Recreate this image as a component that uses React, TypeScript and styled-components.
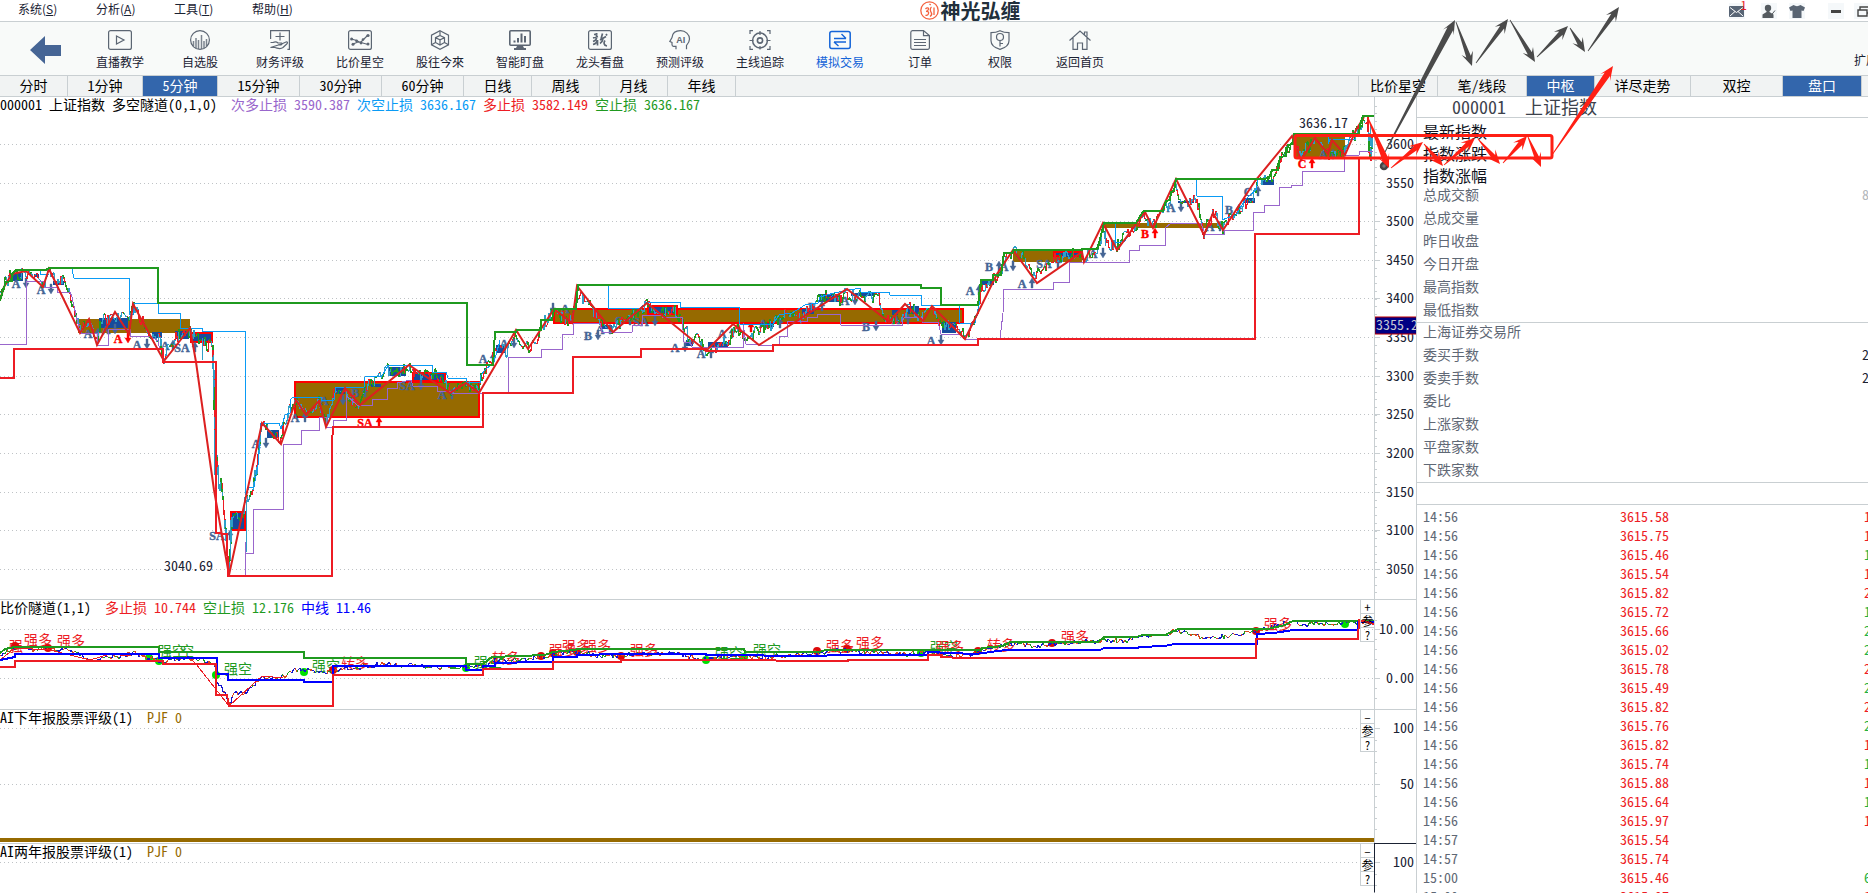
import React from "react";
import styled, { createGlobalStyle, css } from "styled-components";

const MONO = `"Noto Sans Mono CJK SC", "Noto Sans CJK SC", "Liberation Mono", monospace`;
const SANS = `"Noto Sans CJK SC", "Liberation Sans", sans-serif`;
const LINE = "#c9cfd2";
const BLUE = "#3366ac";
const RED = "#ed1c24";
const GREEN = "#1f9a1f";
const OLIVE = "#966a00";
const STEEL = "#466595";
const INK = "#1a2233";
const GREY = "#5f6875";

const GlobalStyle = createGlobalStyle`
  * { box-sizing: border-box; }
  body { margin: 0; background: #fff; overflow: hidden; }
  button { font: inherit; color: inherit; border: 0; padding: 0; margin: 0; background: none; cursor: pointer; }
`;

const Shell = styled.div`
  position: relative;
  display: flex;
  flex-direction: column;
  height: 100vh;
  overflow: hidden;
  font-family: ${SANS};
  font-size: 12px;
  color: ${INK};
`;

const MenuBar = styled.header`
  display: grid;
  grid-template-columns: 1fr auto 1fr;
  align-items: center;
  height: 22px;
  flex: none;
  border-bottom: 1px solid ${LINE};
`;

const Menus = styled.nav`
  display: flex;
  padding-left: 18px;
`;

const MenuButton = styled.button`
  width: 78px;
  padding-bottom: 3px;
  text-align: left;
  line-height: 18px;
`;

const Brand = styled.div`
  display: flex;
  align-items: center;
  gap: 2px;
  padding-left: 72px;
  font-size: 20px;
  line-height: 18px;
  font-weight: 700;
  color: #22303c;
`;

const WindowTools = styled.div`
  display: flex;
  justify-content: flex-end;
  align-items: center;
  margin-right: -2px;
`;

const WindowButton = styled.button<{ $space?: number }>`
  position: relative;
  flex: none;
  width: 16px;
  height: 16px;
  margin-left: ${(p) => p.$space ?? 12}px;
  background: #f5f8fa;
  svg { display: block; }
`;

const Badge = styled.span`
  position: absolute;
  top: -4px;
  right: -2px;
  color: ${RED};
  font-size: 12px;
  line-height: 12px;
`;

const ToolBar = styled.div`
  display: flex;
  height: 54px;
  flex: none;
  background: #f8faf9;
  border-bottom: 1px solid ${LINE};
`;

const BackButton = styled.button`
  display: flex;
  align-items: flex-start;
  width: 62px;
  margin-right: 18px;
  padding: 14px 0 0 30px;
`;

const ToolButton = styled.button<{ $active?: boolean }>`
  display: flex;
  flex-direction: column;
  align-items: center;
  gap: 3px;
  width: 80px;
  padding-top: 8px;
  line-height: 18px;
  color: ${(p) => (p.$active ? "#1464d8" : INK)};
  svg { display: block; color: ${(p) => (p.$active ? "#1464d8" : "#5c6673")}; }
`;

const ExtendButton = styled.button`
  width: 14px;
  margin-left: auto;
  padding-top: 21px;
  white-space: nowrap;
  overflow: hidden;
`;

const TabBar = styled.div`
  display: flex;
  height: 21px;
  flex: none;
  background: #f1f3f3;
  border-bottom: 1px solid ${LINE};
  font-family: ${MONO};
  font-size: 14px;
`;

const TabGroup = styled.div<{ $end?: boolean }>`
  display: flex;
  ${(p) => p.$end && css`margin-left: auto; border-left: 1px solid ${LINE}; padding-right: 6px;`}
`;

const Tab = styled.button<{ $width: number; $active?: boolean }>`
  width: ${(p) => p.$width}px;
  border-right: 1px solid ${LINE};
  padding-bottom: 2px;
  line-height: 18px;
  background: ${(p) => (p.$active ? BLUE : "transparent")};
  color: ${(p) => (p.$active ? "#fff" : "#000")};
`;

const Body = styled.main`
  display: flex;
  flex: 1;
  min-height: 0;
`;

const Charts = styled.section`
  display: grid;
  grid-template-rows: minmax(0, 503fr) minmax(0, 110fr) minmax(0, 134fr) minmax(0, 49fr);
  flex: 1;
  min-width: 0;
  border-right: 1px solid ${LINE};
`;

const Pane = styled.div`
  display: grid;
  grid-template-columns: 1fr 42px;
  min-height: 0;
`;

const Plot = styled.div<{ $last?: boolean }>`
  position: relative;
  display: flex;
  flex-direction: column;
  min-width: 0;
  min-height: 0;
  border-bottom: ${(p) => (p.$last ? 0 : 1)}px solid ${LINE};
`;

const PlotTitle = styled.div`
  display: flex;
  gap: 7px;
  height: 16px;
  flex: none;
  font-family: ${MONO};
  font-size: 14px;
  line-height: 14px;
  white-space: pre;
  color: #000;
`;

const Reading = styled.span<{ $color: string }>`
  color: ${(p) => p.$color};
`;

const PlotSvg = styled.svg`
  display: block;
  width: 100%;
  flex: 1;
  min-height: 0;
`;

const AxisBox = styled.div<{ $focus?: boolean }>`
  min-height: 0;
  overflow: hidden;
  border-left: 1px solid ${(p) => (p.$focus ? INK : LINE)};
  border-bottom: 1px solid ${LINE};
  ${(p) => p.$focus && css`border-bottom-color: transparent; margin-top: -1px; border-top: 1px solid ${INK};`}
  svg { display: block; }
`;

const PaneButtons = styled.div`
  position: absolute;
  top: 0;
  right: 0;
  display: flex;
  flex-direction: column;
  width: 14px;
  border-left: 1px solid ${LINE};
`;

const PaneButton = styled.button`
  height: 14px;
  border-bottom: 1px solid ${LINE};
  font-family: ${MONO};
  font-size: 12px;
  line-height: 13px;
  color: #000;
`;

const Side = styled.aside`
  width: 451px;
  flex: none;
  overflow: hidden;
`;

const SideTitle = styled.h1`
  display: flex;
  gap: 19px;
  height: 21px;
  margin: 0;
  padding-left: 35px;
  border-bottom: 1px solid ${LINE};
  font-family: ${MONO};
  font-size: 18px;
  font-weight: 400;
  line-height: 18px;
  color: #3c424c;
`;

const Facts = styled.dl<{ $row: number; $size: number; $color: string; $pull?: number; $line?: boolean }>`
  margin: ${(p) => p.$pull ?? 0}px 0 0;
  padding: 0 0 0 6px;
  font-family: ${MONO};
  font-size: ${(p) => p.$size}px;
  line-height: ${(p) => p.$row - 2}px;
  color: ${(p) => p.$color};
  border-bottom: ${(p) => (p.$line ? 1 : 0)}px solid ${LINE};
`;

const Fact = styled.div`
  display: flex;
  justify-content: space-between;
  padding-bottom: 2px;
  dt, dd { margin: 0; }
`;

const Cut = styled.dd<{ $color: string }>`
  width: 6px;
  overflow: hidden;
  color: ${(p) => p.$color};
`;

const Spacer = styled.div`
  height: 22px;
  border-bottom: 1px solid ${LINE};
`;

const Ticks = styled.table`
  width: 100%;
  margin-top: 3px;
  table-layout: fixed;
  border-collapse: collapse;
  font-family: ${MONO};
  font-size: 14px;
  line-height: 17px;
  td { padding: 0 0 2px; height: 19px; overflow: hidden; white-space: nowrap; }
`;

const TimeCell = styled.td`
  width: 203px;
  color: ${GREY};
  text-indent: 6px;
`;

const PriceCell = styled.td`
  color: ${RED};
`;

const VolumeCell = styled.td<{ $up?: boolean }>`
  width: 4px;
  color: ${(p) => (p.$up ? RED : "#1fb141")};
`;

const Annotation = styled.svg`
  position: absolute;
  top: 0;
  right: 0;
  width: 578px;
  height: 180px;
  pointer-events: none;
`;

/* ---------- drawing helpers ---------- */

type Pt = [number, number];
const toPts = (s: string): Pt[] => s.trim().split(/\s+/).map((p) => p.split(",").map(Number) as Pt);

/* Splits a jittered walk along a centre line into one path per colour. */
function walk(centre: string, amp: number, step: number, weights: number[], seedStart: number): string[] {
  let seed = seedStart;
  const rnd = () => ((seed = (seed * 1103515245 + 12345) % 2147483648) / 2147483648);
  const pts = toPts(centre);
  const out = weights.map(() => "");
  let prev: Pt = pts[0];
  for (let i = 1; i < pts.length; i++) {
    const [x0, y0] = pts[i - 1];
    const [x1, y1] = pts[i];
    const n = Math.max(1, Math.round(Math.hypot(x1 - x0, (y1 - y0) / 4) / step));
    for (let k = 1; k <= n; k++) {
      const t = k / n;
      const next: Pt = [Math.round(x0 + (x1 - x0) * t), Math.round(y0 + (y1 - y0) * t + (rnd() - 0.5) * 2 * amp)];
      let r = rnd();
      let c = 0;
      while (c < weights.length - 1 && r > weights[c]) r -= weights[c++];
      out[c] += `M${prev[0]},${prev[1]}L${next[0]},${next[1]}`;
      prev = next;
    }
  }
  return out;
}

const PRICE = `0,292 3,287 12,272 14,277 26,273 38,277 43,286 49,270 56,280 62,280 70,293 80,330 88,320 97,343 101,318 108,322 115,315 127,320 133,306 140,318 150,332 158,336 164,360 175,337 185,333 190,332 200,338 208,345 213,344 215,430 219,490 221,480 225,520 229,570 232,520 243,515 246,500 252,492 258,460 262,425 268,432 276,436 281,442 285,420 295,402 306,415 319,402 326,425 335,392 345,390 352,400 358,403 366,385 375,382 388,370 400,372 409,368 420,377 436,375 450,390 466,384 479,391 481,380 487,368 492,361 496,348 507,352 514,334 528,348 538,338 545,322 554,311 562,318 572,321 577,290 583,300 595,312 602,325 613,331 625,320 640,312 648,304 660,311 675,312 682,320 690,342 700,340 706,350 720,345 730,342 734,328 742,330 748,340 755,332 765,328 775,322 785,316 800,318 812,308 818,300 830,295 840,300 846,292 852,298 860,293 870,298 878,293 884,315 890,322 900,318 910,308 923,318 932,307 940,325 950,325 960,325 965,337 975,320 980,300 982,285 990,282 1000,275 1006,258 1013,252 1024,256 1033,275 1041,268 1052,260 1065,256 1078,253 1084,258 1098,250 1103,226 1108,245 1117,246 1128,235 1140,222 1145,214 1153,226 1163,213 1172,195 1176,182 1182,205 1192,201 1198,203 1204,232 1213,215 1223,228 1232,216 1245,203 1252,198 1258,182 1270,180 1280,160 1287,152 1293,140 1300,155 1315,142 1330,155 1345,150 1357,132 1364,120 1368,122 1370,160 1373,135`;

const ZIGZAG = `0,300 4,287 12,274 26,271 43,287 49,269 80,333 89,319 97,345 115,312 129,334 133,304 164,361 190,328 196,362 214,490 229,575 262,423 281,444 296,400 306,415 319,401 326,427 345,388 360,405 409,365 450,393 466,383 479,393 516,330 528,349 554,309 572,323 577,286 613,332 647,303 706,351 733,324 759,345 847,289 889,322 905,304 923,321 932,306 965,339 997,274 1013,250 1037,283 1082,252 1084,262 1103,223 1117,250 1145,212 1153,228 1176,179 1204,235 1213,213 1223,230 1255,181 1292,136 1301,160 1315,138 1328,154 1332,140 1345,155 1356,130 1364,117`;

const UPPER = `0,301 3,290 6,282 12,281 12,274 16,270 46,270 49,268 158,268 158,303 467,303 467,365 493,365 495,332 516,332 517,330 541,330 541,320 552,320 554,309 576,309 578,285 921,285 921,288 941,288 941,305 978,305 981,280 993,280 993,275 1001,275 1004,253 1012,253 1014,250 1082,250 1082,249 1097,249 1099,243 1104,223 1136,223 1142,213 1144,211 1163,211 1166,201 1170,200 1171,192 1174,191 1176,179 1265,179 1270,176 1272,170 1278,170 1280,157 1286,156 1288,145 1293,144 1294,134 1359,134 1360,125 1363,116 1374,116`;
const LOWER = `0,378 14,378 14,349 163,349 163,362 216,362 216,533 227,534 228,576 332,576 332,444 333,427 483,427 483,393 573,393 573,357 641,357 641,349 706,349 706,351 773,351 773,345 978,345 978,339 1255,339 1255,234 1359,234 1359,158`;
const VIOLET = `0,344 26,344 26,281 43,281 43,287 57,287 57,292 70,292 72,297 80,333 97,333 97,345 108,345 108,329 130,329 130,336 150,336 158,341 160,350`;
const VIOLET2 = `245,575 245,542 246,553 253,553 253,509 283,509 283,444 301,444 301,430 319,430 319,417 326,417 326,427 333,427 333,420 346,420 346,395 357,405 372,405 372,399 387,399 387,388 397,388 397,383 411,380 413,386 437,386 437,391 450,391 453,393 508,393 508,357 541,357 541,349 562,349 562,334 573,334 573,323 600,323 602,332 632,332 633,325 642,325 642,315 662,315 662,317 682,317 683,330 684,342 690,342 692,347 743,347 743,323 746,344 759,345 779,345 779,336 787,336 787,321 807,321 807,317 817,317 817,314 840,314 841,325 902,325 902,321 905,317 922,317 922,322 938,322 941,334 960,334 965,339 1000,339 1003,313 1004,289 1053,289 1053,282 1069,282 1069,262 1129,262 1129,250 1139,250 1139,245 1165,245 1165,228 1171,223 1201,223 1205,234 1224,234 1224,230 1253,230 1253,212 1264,212 1264,205 1279,205 1279,187 1291,187 1291,185 1302,185 1302,171 1344,171 1344,156 1359,155 1360,151 1373,151`;
const SKY = [
  "40,271 40,274 49,274",
  "72,269 74,278 129,278 129,314 133,314 133,303 158,303 158,313 180,313 180,328 202,328 202,331 245,331 245,414 246,495 249,487 254,487 258,465 261,423 279,423 281,429 285,415 290,413 290,400 293,397 321,397 321,400 334,400 336,387 364,387 365,377 382,376 388,366 393,365 432,365 432,372 446,372 448,378 466,378 466,382 480,383 481,375 485,370 494,362 500,340",
  "608,286 608,308 640,308 648,302 680,302 680,307 739,307 740,324 773,324 779,315 792,313 805,305 818,303 820,297 834,293 860,288 861,292 889,292 890,295 921,295 921,305 959,306 960,323 975,323 980,300",
  "1115,224 1115,243 1125,241 1135,225",
  "1196,180 1197,196 1222,196 1222,220 1232,216 1236,215 1245,200 1250,195 1256,190 1258,180",
  "1328,137 1328,144 1330,139 1355,140",
];

const priceWalk = walk(PRICE, 7, 1.3, [0.44, 0.26, 0.3], 7);

type Box = [number, number, number, number, boolean?];
const CENTRES: Box[] = [
  [78, 319, 112, 14],
  [295, 382, 184, 35, true],
  [554, 309, 409, 14, true],
  [1013, 251, 69, 11],
  [1103, 223, 117, 5],
  [1294, 134, 51, 23],
];
const BLOCKS: Box[] = [
  [12, 273, 11, 8], [34, 274, 5, 3], [53, 281, 11, 4], [99, 318, 29, 10], [152, 332, 10, 6], [175, 331, 14, 8],
  [191, 333, 21, 9, true], [231, 512, 14, 18, true], [267, 430, 12, 8], [336, 388, 9, 6], [371, 384, 10, 3], [389, 367, 17, 9],
  [413, 373, 32, 8, true], [496, 345, 10, 8], [600, 325, 12, 4], [648, 306, 29, 8, true], [686, 340, 7, 6],
  [708, 342, 20, 5], [760, 323, 14, 4], [802, 309, 12, 5], [819, 294, 21, 8], [851, 293, 23, 3], [892, 310, 6, 5],
  [908, 306, 11, 8], [942, 322, 14, 11], [981, 280, 13, 5], [1054, 252, 28, 4, true], [1062, 254, 12, 3],
  [1178, 201, 16, 2], [1243, 198, 12, 5], [1262, 180, 12, 5],
];

/* text, x, y, arrow x, arrow direction, highlighted */
type Mark = [string, number, number, number, number, boolean?];
const MARKS: Mark[] = [
  ["A", 16, 288, 26, 1], ["A", 41, 294, 51, 1], ["A", 88, 338, 98, -1], ["A", 118, 343, 128, 1, true], ["A", 106, 334, 115, 1],
  ["A", 137, 349, 147, 1], ["A", 165, 350, 173, -1], ["SA", 182, 352, 195, -1], ["SA", 217, 540, 230, -1],
  ["A", 256, 448, 266, 1], ["A", 295, 422, 305, -1], ["A", 324, 405, 343, 1], ["B", 355, 397, 365, -1], ["SA", 407, 390, 421, 1],
  ["A", 442, 399, 452, -1], ["SA", 365, 427, 379, -1, true], ["A", 483, 363, 493, -1], ["A", 504, 348, 514, 1],
  ["A", 565, 313, 553, 1], ["B", 588, 340, 598, 1], ["A", 600, 334, 610, -1], ["C", 619, 325, 630, -1], ["SA", 641, 326, 655, 1],
  ["A", 675, 352, 685, 1], ["A", 701, 358, 711, -1], ["A", 722, 338, 732, -1], ["A", 738, 332, 751, -1, true],
  ["A", 763, 328, 780, -1], ["B", 812, 311, 822, -1], ["A", 845, 305, 855, 1], ["B", 866, 331, 876, 1],
  ["A", 896, 324, 908, -1], ["A", 931, 345, 941, 1], ["A", 970, 295, 979, -1], ["B", 989, 271, 999, -1],
  ["A", 1004, 271, 1013, 1], ["A", 1022, 288, 1032, -1], ["SA", 1044, 268, 1058, -1], ["A", 1093, 258, 1103, 1],
  ["B", 1145, 238, 1155, -1, true], ["A", 1171, 212, 1181, 1], ["A", 1210, 231, 1220, -1], ["B", 1229, 214, 1239, -1],
  ["C", 1248, 196, 1258, -1], ["C", 1302, 168, 1312, -1, true], ["A", 1323, 159, 1333, -1],
];

const Rect = ({ box, fill }: { box: Box; fill: string }) => (
  <rect x={box[0]} y={box[1]} width={box[2]} height={box[3]} fill={fill} stroke={box[4] ? "#f00" : "none"} strokeWidth="2" />
);

const Line = ({ points, color, width = 1 }: { points: string; color: string; width?: number }) => (
  <polyline points={points} fill="none" stroke={color} strokeWidth={width} />
);

const Grid = ({ rows }: { rows: number[] }) => (
  <g stroke="#bfc3c6" strokeDasharray="1 3" shapeRendering="crispEdges">
    {rows.map((y) => <line key={y} x1="0" x2="1374" y1={y} y2={y} />)}
  </g>
);

const PRICE_ROWS: [number, number][] = [
  [144, 3600], [183, 3550], [221, 3500], [260, 3450], [298, 3400], [337, 3350],
  [376, 3300], [414, 3250], [453, 3200], [492, 3150], [530, 3100], [569, 3050],
];

function PricePlot() {
  return (
    <PlotSvg viewBox="0 113 1374 486" preserveAspectRatio="xMinYMin meet" role="img" aria-label="上证指数 5分钟">
      <Grid rows={PRICE_ROWS.map(([y]) => y + 0.5)} />
      <g shapeRendering="crispEdges">
        {CENTRES.map((b, i) => <Rect key={i} box={b} fill={OLIVE} />)}
        {BLOCKS.map((b, i) => <Rect key={i} box={b} fill="#164b9c" />)}
      </g>
      <g fontFamily={`"Liberation Serif", serif`} fontWeight="700" fontSize="12" textAnchor="middle">
        {MARKS.map(([t, x, y, ax, dir, hot], i) => (
          <g key={i} fill={hot ? "#f00" : STEEL} stroke={hot ? "#f00" : STEEL} strokeWidth="0.4">
            <text x={x} y={y}>{t}</text>
            <path d={dir > 0
              ? `M${ax - 1},${y - 10}h2v5h2l-3,5l-3,-5h2z`
              : `M${ax - 1},${y}h2v-5h2l-3,-5l-3,5h2z`} />
          </g>
        ))}
      </g>
      <g fill="none" shapeRendering="crispEdges">
        <path d={priceWalk[0]} stroke="#2f9fc8" strokeWidth="1.3" />
        <path d={priceWalk[1]} stroke={RED} strokeWidth="1.3" />
        <path d={priceWalk[2]} stroke={GREEN} strokeWidth="1.5" />
        <path d="M213,355V400M214,430V475M202,338V360M246,500V552M230,520V560M1370,125V146M1105,228V246" stroke="#2f9fc8" />
        <Line points={VIOLET} color="#9966cc" />
        <Line points={VIOLET2} color="#9966cc" />
        {SKY.map((p) => <Line key={p} points={p} color="#0a9bf5" />)}
      </g>
      <Line points={ZIGZAG} color="#dc2020" width={2} />
      <g shapeRendering="crispEdges">
        <Line points={UPPER} color={GREEN} width={2} />
        <Line points={LOWER} color={RED} width={2} />
      </g>
      <g fontFamily={MONO} fontSize="14" fill={INK}>
        <text x="1299" y="128">3636.17</text>
        <text x="164" y="571">3040.69</text>
      </g>
    </PlotSvg>
  );
}

const RATIO = `0,655 15,648 30,650 40,648 60,650 75,652 85,658 95,660 105,656 120,656 133,653 150,658 163,662 175,660 187,658 200,660 215,662 216,680 222,688 229,704 235,692 245,695 255,685 262,677 280,678 295,670 304,671 325,673 333,670 350,669 380,664 420,666 450,668 466,667 483,666 495,660 520,660 545,657 555,653 575,652 600,656 640,654 680,654 700,660 730,655 760,658 790,655 830,651 870,652 900,654 925,652 945,656 965,656 985,650 1003,645 1020,644 1035,647 1060,643 1095,642 1105,640 1125,641 1140,636 1160,636 1177,631 1190,633 1205,638 1230,636 1250,632 1275,626 1292,621 1300,625 1320,623 1345,623 1374,622`;
const ratioWalk = walk(RATIO, 2.4, 1.6, [0.4, 0.35, 0.25], 21);

const R_UP = `0,653 5,649 15,647 159,647 159,652 304,652 304,658 466,658 466,664 483,664 492,657 545,655 553,652 575,650 578,649 744,649 745,652 820,652 825,650 980,650 982,648 1003,646 1010,642 1098,642 1104,637 1137,637 1142,635 1165,635 1178,629 1268,629 1285,625 1293,621 1374,621`;
const R_LOW = `0,667 15,667 15,661 163,661 163,664 216,664 216,695 227,695 229,706 333,706 333,675 483,675 483,669 553,669 553,662 621,662 621,660 700,660 848,661 848,660 928,660 928,655 941,655 941,657 963,658 1256,658 1256,639 1358,639 1359,620 1374,624`;
const R_MID = `0,660 15,657 15,654 159,654 159,658 217,658 217,674 228,674 228,680 304,680 304,682 333,682 333,666 466,666 466,670 483,670 483,666 495,666 495,663 541,662 553,662 553,657 577,657 577,655 622,654 706,654 706,655 820,656 835,655 928,655 928,652 975,654 1006,650 1100,650 1104,648 1137,648 1140,647 1165,646 1174,644 1257,644 1257,634 1274,633 1293,630 1358,630 1358,622 1374,622`;

const SIGNALS: [string, number, number, boolean][] = [
  ["强", 9, 651, true], ["强多", 24, 645, true], ["强多", 57, 646, true], ["强空", 158, 656, false], ["空", 180, 656, false],
  ["强空", 224, 674, false], ["强空", 312, 671, false], ["转多", 341, 668, true], ["强空", 474, 667, false], ["转多", 492, 663, true],
  ["强多", 549, 655, true], ["强多", 562, 651, true], ["强多", 583, 651, true], ["强多", 630, 655, true], ["强空", 715, 658, false],
  ["强空", 753, 655, false], ["强多", 826, 651, true], ["强多", 856, 648, true], ["强空", 930, 652, false], ["强多", 936, 652, true],
  ["转多", 987, 650, true], ["强多", 1061, 642, true], ["强多", 1264, 629, true],
];
const R_DOTS = "15,646 48,648 333,670 541,656 553,653 577,652 621,656 817,651 847,649 978,651 1052,643 1256,631";
const G_DOTS = "149,658 159,661 216,675 304,672 466,668 706,660 744,657 921,653 1345,624";

function RatioPlot() {
  return (
    <PlotSvg viewBox="0 616 1374 93" preserveAspectRatio="xMinYMin meet" role="img" aria-label="比价隧道">
      <Grid rows={[629.5, 678.5]} />
      <g fontFamily={MONO} fontSize="14">
        {SIGNALS.map(([t, x, y, up], i) => <text key={i} x={x} y={y} fill={up ? RED : GREEN}>{t}</text>)}
      </g>
      {toPts(R_DOTS).map(([x, y]) => <circle key={x} cx={x} cy={y} r="4" fill="#dc0a0a" />)}
      {toPts(G_DOTS).map(([x, y]) => <circle key={x} cx={x} cy={y} r="4" fill="#00e000" />)}
      <g fill="none" shapeRendering="crispEdges">
        <path d={ratioWalk[2]} stroke={GREEN} strokeWidth="1.3" />
        <path d={ratioWalk[1]} stroke="#d8481c" strokeWidth="1.3" />
        <path d={ratioWalk[0]} stroke="#1414d0" strokeWidth="1.3" />
        <Line points="0,660 15,648 50,650 90,660 110,654 130,656" color={RED} />
        <Line points="190,658 196,664 229,706 262,676 283,678" color={RED} />
        <Line points={R_UP} color={GREEN} width={2} />
        <Line points={R_MID} color="#0000ff" width={2} />
        <Line points={R_LOW} color={RED} width={2} />
      </g>
    </PlotSvg>
  );
}

interface AxisProps {
  top: number;
  height: number;
  labels: [number, string][];
  minor: number;
  first: number;
  tag?: { y: number; text: string };
  focus?: boolean;
}

function Axis({ top, height, labels, minor, first, tag, focus }: AxisProps) {
  const ticks: number[] = [];
  for (let y = first; y < top + height - 4; y += minor) ticks.push(Math.round(y));
  return (
    <AxisBox $focus={focus}>
      <svg width="42" height={height} viewBox={`1375 ${top} 42 ${height}`}>
        <g stroke={LINE} shapeRendering="crispEdges">
          {ticks.map((y) => <line key={y} x1="1375" x2="1377" y1={y + 0.5} y2={y + 0.5} />)}
          {labels.map(([y]) => <line key={y} x1="1375" x2="1380" y1={y + 0.5} y2={y + 0.5} />)}
        </g>
        <g fontFamily={MONO} fontSize="14" fill={INK} textAnchor="end">
          {labels.map(([y, t]) => <text key={y} x="1414" y={y + 5}>{t}</text>)}
        </g>
        {tag && (
          <g>
            <rect x="1375" y={tag.y} width="44" height="17" fill="#000084" stroke="#c00000" />
            <text x="1376" y={tag.y + 13} fontFamily={MONO} fontSize="14" fill="#c4c8d4">{tag.text}</text>
          </g>
        )}
      </svg>
    </AxisBox>
  );
}

const Buttons = ({ first }: { first: string }) => (
  <PaneButtons>
    {[first, "参", "?"].map((t) => <PaneButton key={t}>{t}</PaneButton>)}
  </PaneButtons>
);

/* ---------- icons ---------- */

const Icon = ({ children }: { children: React.ReactNode }) => (
  <svg width="24" height="20" viewBox="0 0 24 20" fill="none" stroke="currentColor" strokeWidth="1.2" aria-hidden="true">
    {children}
  </svg>
);
const Frame = () => <rect x="0.6" y="0.6" width="22.8" height="18.8" rx="2" />;

const TOOLS: [string, React.ReactNode, boolean?][] = [
  ["直播教学", <><Frame /><path d="M8.5 6l7.500 4l-7.500 4z" /></>],
  ["自选股", <><circle cx="12" cy="10" r="9.4" /><path d="M5.500 16v-5M8 18V8M10.500 19v-9M13.500 19V5M16 18v-7M18.500 16V9" strokeWidth="1.500" opacity="0.8" /></>],
  ["财务评级", <><path d="M2.600 9V.6h18.800v18.800h-2M12 2.500v8M7.500 6.500h9" /><path d="M2.500 12.500h2.500c2-1 4-.5 5 .5h3.500c1 .5.500 1.700-.5 1.800h-3M13.500 14l4.500-2c1.500-.3 2 .8 1 1.700l-4 3.800c-2 1.500-4 1.200-6 .6l-2-.6H2.500z" /></>],
  ["比价星空", <><Frame /><path d="M3.500 9l5 1.500l4 2l7-7M5 14l5-2l3 .5l7 2" /><g fill="currentColor" stroke="none"><circle cx="3.600" cy="9" r="1.500" /><circle cx="8.500" cy="10.800" r="1.400" /><circle cx="20" cy="5.500" r="1.600" /><circle cx="15" cy="9.500" r="1.300" /><circle cx="20" cy="14" r="1.500" /><circle cx="5" cy="14.300" r="1.500" /><circle cx="13" cy="13" r="1.400" /></g></>],
  ["股往今來", <><path d="M12 .7l8.500 4.500v9.600L12 19.300l-8.500-4.500V5.200z" /><path d="M12 5.500l4.500 2.200v4.800L12 15l-4.500-2.500V7.700zM7.500 7.700l4.500 2.200l4.500-2.200M12 10v5M12 .7v4.800M3.500 14.800l4-2.300M20.500 14.800l-4-2.300" /></>],
  ["智能盯盘", <><rect x="1.800" y="0.800" width="20.400" height="14.400" rx="1" strokeWidth="1.600" /><path d="M6.500 12.500v-2M10 12.500V8M13.500 12.500V3.500M17 12.500V6" strokeWidth="2" /><path d="M9 16h6l1 2h2v2H6v-2h2z" fill="currentColor" stroke="none" /></>],
  ["龙头看盘", <><Frame /><path d="M6 4.500l3.500-.5M5 8l5-1.500M8.500 3v5c0 2-2 3-3.500 3.500M5 14.500c2-.5 4-2 4.500-4.500v5.500M14.500 3.500L13 9M12 10l6-3.500M15 9c-.5 2-2 4-3 4.500M17 10.500c-1.500 2-1.500 5 2 5.500M18 4l1 1.500" strokeWidth="1.700" /></>],
  ["预测评级", <><path d="M8 19.300v-3H5.500c-1 0-1.500-.8-1.500-1.800v-2L1.800 11.500l2.200-4C4.500 3 8 .7 12.500.7c5 0 9 3.600 9 8.300c0 3-1.300 4.500-3 6.500v3.800" /><text x="12.800" y="13" fontSize="9" fontWeight="700" textAnchor="middle" fontFamily="Liberation Sans, sans-serif" fill="currentColor" stroke="none">AI</text></>],
  ["主线追踪", <><circle cx="12" cy="10.500" r="7.400" strokeWidth="1.500" /><circle cx="12" cy="10.500" r="2.600" strokeWidth="1.600" /><path d="M12 1v4M12 16v3.500M1.500 10.500h4M18.500 10.500h4M2 4V.6h3M19 .6h3V4M2 16v3.400h3M19 19.400h3V16" /></>],
  ["模拟交易", <><rect x="1.800" y="1.600" width="20.400" height="17" rx="2" strokeWidth="1.500" /><path d="M6 8.500h12M18 8.500L13.500 4M18 12H6M6 12l4.500 4" strokeWidth="1.400" /></>, true],
  ["订单", <><path d="M4.500.6h11l5.900 5v12a1.800 1.800 0 0 1-1.800 1.800h-15a1.800 1.800 0 0 1-1.800-1.800v-15.200a1.800 1.800 0 0 1 1.700-1.800zM15.500.6v5h5.900M6 9.500h12M6 12.500h12M6 15.500h12" /></>],
  ["权限", <><path d="M12 .7c3 1.500 6 2 9 2v8c0 4.500-4.500 7.300-9 8.700c-4.500-1.400-9-4.200-9-8.700v-8c3 0 6-.5 9-2z" /><circle cx="12" cy="7" r="3.500" /><path d="M12 10.500v6M12 13.500h3" /></>],
  ["返回首页", <><path d="M1.500 10.500L12 1l10.500 9.500M5 8v11.400h4.500V13h5v6.400H19V8M16.500 4.500V2H19v4.500" /></>],
];

/* ---------- data ---------- */

const PERIODS: [string, number, boolean?][] = [
  ["分时", 68], ["1分钟", 75], ["5分钟", 75, true], ["15分钟", 82], ["30分钟", 82], ["60分钟", 82],
  ["日线", 68], ["周线", 68], ["月线", 68], ["年线", 68],
];
const VIEWS: [string, number, boolean?][] = [
  ["比价星空", 79], ["笔/线段", 89], ["中枢", 68, true], ["详尽走势", 96], ["双控", 92], ["盘口", 79, true],
];
const MENUS: [string, string][] = [["系统", "S"], ["分析", "A"], ["工具", "T"], ["帮助", "H"]];

const TRADES: [string, string, string, boolean?][] = [
  ["14:56", "3615.58", "1", true], ["14:56", "3615.75", "1", true], ["14:56", "3615.46", "1"], ["14:56", "3615.54", "1", true],
  ["14:56", "3615.82", "2", true], ["14:56", "3615.72", "1"], ["14:56", "3615.66", "2"], ["14:56", "3615.02", "2"],
  ["14:56", "3615.78", "2", true], ["14:56", "3615.49", "2"], ["14:56", "3615.82", "2", true], ["14:56", "3615.76", "2"],
  ["14:56", "3615.82", "1", true], ["14:56", "3615.74", "1"], ["14:56", "3615.88", "1", true], ["14:56", "3615.64", "1"],
  ["14:56", "3615.97", "1", true], ["14:57", "3615.54", ""], ["14:57", "3615.74", ""], ["15:00", "3615.46", "6"],
  ["15:00", "3615.97", "1", true],
];

/* A hand-drawn style arrow: thin tail that swells into a barbed head. */
function arrow(x1: number, y1: number, x2: number, y2: number, w = 3): string {
  const len = Math.hypot(x2 - x1, y2 - y1);
  const ux = (x2 - x1) / len;
  const uy = (y2 - y1) / len;
  const at = (along: number, side: number) =>
    `${(x1 + ux * along - uy * side).toFixed(1)},${(y1 + uy * along + ux * side).toFixed(1)}`;
  return [at(0, 0.4), at(len - 10, w * 0.8), at(len - 14, 6), at(len, 0), at(len - 14, -6), at(len - 10, -w * 0.8), at(0, -0.4)].join(" ");
}

const GREY_ARROWS = [
  arrow(1385, 152, 1455, 20, 4), arrow(1456, 22, 1472, 66), arrow(1476, 63, 1508, 19), arrow(1510, 20, 1535, 62),
  arrow(1537, 57, 1568, 26), arrow(1570, 28, 1585, 52), arrow(1588, 51, 1619, 7),
];
const RED_ARROWS = [
  arrow(1368, 118, 1389, 168, 4), arrow(1391, 168, 1423, 142), arrow(1424, 144, 1443, 166), arrow(1444, 165, 1475, 138),
  arrow(1478, 139, 1500, 164), arrow(1503, 163, 1527, 136), arrow(1528, 137, 1541, 167), arrow(1552, 155, 1613, 66, 4),
];

export default function App() {
  return (
    <Shell>
      <GlobalStyle />
      <MenuBar>
        <Menus>
          {MENUS.map(([t, k]) => <MenuButton key={k}>{t}(<u>{k}</u>)</MenuButton>)}
        </Menus>
        <Brand>
          <svg width="19" height="19" viewBox="0 0 19 19" fill="none" stroke="#f4623f" strokeWidth="1.300" aria-hidden="true">
            <circle cx="9.500" cy="9.500" r="8.700" />
            <path d="M9.500 3l1.200 1M5.500 8c1.500-1.800 3.500-1.200 3 .3S6.500 10.300 6 10.300c2 0 3 .7 2.500 2.300s-2 2-3 1.500M11.500 6c-1.500 1-1.500 4-.3 5.500c1 1.500.300 3-1.200 4M14 6.500v7.500" />
          </svg>
          神光弘缠
        </Brand>
        <WindowTools>
          <WindowButton aria-label="消息">
            <svg width="16" height="16" viewBox="0 0 16 16">
              <rect x="0" y="3" width="15" height="11" rx="1" fill="#586575" />
              <path d="M1 4.500l6.500 5l6.500-5M1 13l5-4.500M14 13L9 8.500" stroke="#fff" fill="none" />
            </svg>
            <Badge>1</Badge>
          </WindowButton>
          <WindowButton aria-label="用户" $space={16}>
            <svg width="16" height="16" viewBox="0 0 16 16" fill="#555b60">
              <circle cx="7" cy="5" r="3.200" />
              <path d="M5.500 7h3v2l4 2.500V15H1.500v-3.500l4-2.500z" />
              <path d="M10 12.500l4-5" stroke="#555b60" />
            </svg>
          </WindowButton>
          <WindowButton aria-label="皮肤">
            <svg width="16" height="16" viewBox="0 0 16 16" fill="#5a6573">
              <path d="M4.500 2c2 1.500 5 1.500 7 0L16 4.500L14.500 8L12.500 7.500V15h-9V7.500L1.500 8L0 4.500z" />
            </svg>
          </WindowButton>
          <WindowButton aria-label="最小化" $space={23}>
            <svg width="16" height="16" viewBox="0 0 16 16"><rect x="3" y="7" width="10" height="3" fill="#444" /></svg>
          </WindowButton>
          <WindowButton aria-label="还原" $space={10}>
            <svg width="16" height="16" viewBox="0 0 16 16" fill="none" stroke="#444" strokeWidth="1.400">
              <path d="M4 7h9v6H4zM6 7V4h10v6h-3" />
            </svg>
          </WindowButton>
        </WindowTools>
      </MenuBar>

      <ToolBar>
        <BackButton aria-label="返回">
          <svg width="32" height="28" viewBox="0 0 32 28"><path d="M0 14L15 0v9h16v11H15v8z" fill={STEEL} /></svg>
        </BackButton>
        {TOOLS.map(([t, art, active]) => (
          <ToolButton key={t} $active={active}>
            <Icon>{art}</Icon>
            {t}
          </ToolButton>
        ))}
        <ExtendButton>扩展</ExtendButton>
      </ToolBar>

      <TabBar>
        <TabGroup>
          {PERIODS.map(([t, w, a]) => <Tab key={t} $width={w} $active={a}>{t}</Tab>)}
        </TabGroup>
        <TabGroup $end>
          {VIEWS.map(([t, w, a]) => <Tab key={t} $width={w} $active={a}>{t}</Tab>)}
        </TabGroup>
      </TabBar>

      <Body>
        <Charts>
          <Pane>
            <Plot>
              <PlotTitle>
                <span>000001</span>
                <span>上证指数</span>
                <span>{"多空隧道(0,1,0) "}</span>
                <Reading $color="#9966cc">次多止损 3590.387</Reading>
                <Reading $color="#0a9bf5">次空止损 3636.167</Reading>
                <Reading $color={RED}>多止损 3582.149</Reading>
                <Reading $color={GREEN}>空止损 3636.167</Reading>
              </PlotTitle>
              <PricePlot />
            </Plot>
            <Axis top={97} height={502} first={105.5} minor={7.73} labels={PRICE_ROWS.map(([y, v]) => [y, String(v)])} tag={{ y: 317, text: "3355.2" }} />
          </Pane>
          <Pane>
            <Plot>
              <PlotTitle>
                <span>{"比价隧道(1,1) "}</span>
                <Reading $color={RED}>多止损 10.744</Reading>
                <Reading $color={GREEN}>空止损 12.176</Reading>
                <Reading $color="#0000ff">中线 11.46</Reading>
              </PlotTitle>
              <RatioPlot />
              <Buttons first="+" />
            </Plot>
            <Axis top={600} height={109} first={619.5} minor={9.8} labels={[[629, "10.00"], [678, "0.00"]]} />
          </Pane>
          <Pane>
            <Plot>
              <PlotTitle>
                <span>{"AI下年报股票评级(1) "}</span>
                <Reading $color={OLIVE}>PJF 0</Reading>
              </PlotTitle>
              <PlotSvg viewBox="0 726 1374 117" preserveAspectRatio="xMinYMin meet">
                <Grid rows={[728.5, 784.5]} />
                <rect x="0" y="838" width="1374" height="4" fill={OLIVE} />
              </PlotSvg>
              <Buttons first="–" />
            </Plot>
            <Axis top={710} height={133} first={739.5} minor={11.2} labels={[[728, "100"], [784, "50"]]} />
          </Pane>
          <Pane>
            <Plot $last>
              <PlotTitle>
                <span>{"AI两年报股票评级(1) "}</span>
                <Reading $color={OLIVE}>PJF 0</Reading>
              </PlotTitle>
              <PlotSvg viewBox="0 860 1374 33" preserveAspectRatio="xMinYMin meet">
                <Grid rows={[862.5]} />
              </PlotSvg>
              <Buttons first="–" />
            </Plot>
            <Axis top={844} height={49} first={873.5} minor={11.2} labels={[[862, "100"]]} focus />
          </Pane>
        </Charts>

        <Side>
          <SideTitle><span>000001</span><span>上证指数</span></SideTitle>
          <Facts $row={22} $size={16} $color="#10131c" $pull={3}>
            {["最新指数", "指数涨跌", "指数涨幅"].map((t) => <Fact key={t}><dt>{t}</dt></Fact>)}
          </Facts>
          <Facts $row={23} $size={14} $color={GREY} $pull={-3} $line>
            <Fact><dt>总成交额</dt><Cut $color="#b4b8bc">8</Cut></Fact>
            {["总成交量", "昨日收盘", "今日开盘", "最高指数", "最低指数"].map((t) => <Fact key={t}><dt>{t}</dt></Fact>)}
          </Facts>
          <Facts $row={23} $size={14} $color={GREY} $pull={-2} $line>
            <Fact><dt>上海证券交易所</dt></Fact>
            <Fact><dt>委买手数</dt><Cut $color={INK}>2</Cut></Fact>
            <Fact><dt>委卖手数</dt><Cut $color={INK}>2</Cut></Fact>
            {["委比", "上涨家数", "平盘家数", "下跌家数"].map((t) => <Fact key={t}><dt>{t}</dt></Fact>)}
          </Facts>
          <Spacer />
          <Ticks>
            <tbody>
              {TRADES.map(([t, p, v, up], i) => (
                <tr key={i}>
                  <TimeCell>{t}</TimeCell>
                  <PriceCell>{p}</PriceCell>
                  <VolumeCell $up={up}>{v}</VolumeCell>
                </tr>
              ))}
            </tbody>
          </Ticks>
        </Side>
      </Body>

      <Annotation viewBox="1290 0 578 180" aria-hidden="true">
        <circle cx="1384" cy="166" r="3" fill="#777" stroke="#444" strokeWidth="2.500" />
        <g fill="#4a4a4a">{GREY_ARROWS.map((p) => <polygon key={p} points={p} />)}</g>
        <rect x="1295" y="135.500" width="257" height="22.500" rx="2" fill="none" stroke="#ff1f14" strokeWidth="3" />
        <g fill="#ff1f14">{RED_ARROWS.map((p) => <polygon key={p} points={p} />)}</g>
      </Annotation>
    </Shell>
  );
}
